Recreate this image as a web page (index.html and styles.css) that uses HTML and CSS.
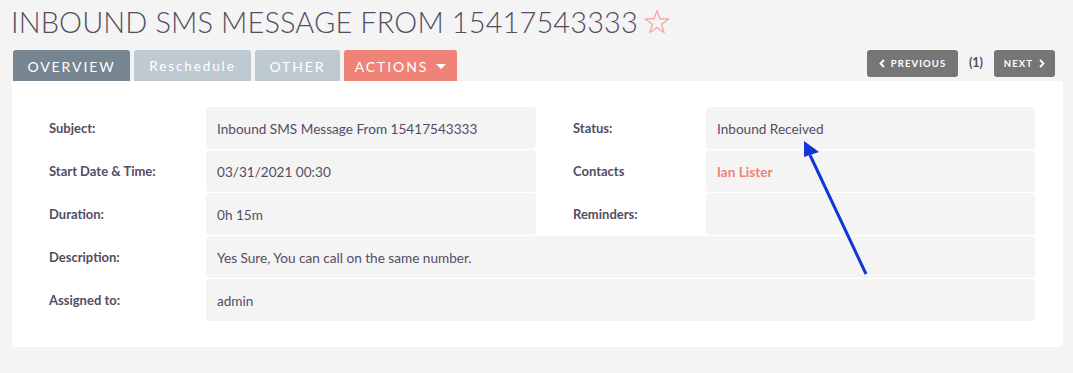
FILE: index.html
```html
<!DOCTYPE html>
<html>
<head>
<meta charset="utf-8">
<link rel="stylesheet" href="styles.css">
</head>
<body>
<div class="page">
  <h1 class="title">INBOUND SMS MESSAGE FROM 15417543333<svg class="star" width="26" height="26" viewBox="0 0 26 26"><polygon points="13,1.5 15.9,9.8 24.6,9.9 17.6,15.2 20.2,23.6 13,18.6 5.8,23.6 8.4,15.2 1.4,9.9 10.1,9.8" fill="none" stroke="#f5a49b" stroke-width="1.2" stroke-linejoin="round"/></svg></h1>
  <div class="bar">
    <div class="tabs">
      <div class="tab active">OVERVIEW</div>
      <div class="tab">Reschedule</div>
      <div class="tab">OTHER</div>
      <div class="tab actions">ACTIONS <span class="caret"></span></div>
    </div>
    <div class="pager">
      <div class="pbtn prev"><svg width="6" height="9" viewBox="0 0 6 9"><polyline points="5,1 1.5,4.5 5,8" fill="none" stroke="#fff" stroke-width="1.8"/></svg>PREVIOUS</div>
      <span class="count">(1)</span>
      <div class="pbtn next">NEXT<svg width="6" height="9" viewBox="0 0 6 9"><polyline points="1,1 4.5,4.5 1,8" fill="none" stroke="#fff" stroke-width="1.8"/></svg></div>
    </div>
  </div>
  <div class="panel">
    <div class="grid">
      <div class="label">Subject:</div>
      <div class="value">Inbound SMS Message From 15417543333</div>
      <div class="spacer"></div>
      <div class="label">Status:</div>
      <div class="value">Inbound Received</div>

      <div class="label">Start Date &amp; Time:</div>
      <div class="value">03/31/2021 00:30</div>
      <div class="spacer"></div>
      <div class="label">Contacts</div>
      <div class="value link">Ian Lister</div>

      <div class="label">Duration:</div>
      <div class="value">0h 15m</div>
      <div class="spacer"></div>
      <div class="label">Reminders:</div>
      <div class="value"></div>

      <div class="label">Description:</div>
      <div class="value wide">Yes Sure, You can call on the same number.</div>

      <div class="label">Assigned to:</div>
      <div class="value wide">admin</div>
    </div>
    <svg class="arrow" width="80" height="150" viewBox="0 0 80 150">
      <line x1="75" y1="141" x2="19" y2="22" stroke="#1136d8" stroke-width="3"/>
      <polygon points="13,8 13,24 28,19" fill="#1136d8"/>
    </svg>
  </div>
</div>
</body>
</html>
```

FILE: styles.css
```css
* { box-sizing: border-box; }
html, body {
  margin: 0;
  padding: 0;
  background: #f4f4f4;
  font-family: Lato, "Open Sans", sans-serif;
  color: #534d64;
}
.page {
  width: 1073px;
  height: 373px;
  padding: 0 10px 0 12px;
}
.title {
  margin: 0 0 0 -1px;
  padding: 6px 0 12px 0;
  height: 50px;
  font-size: 29px;
  font-weight: 300;
  letter-spacing: 0.1px;
  line-height: 32px;
  display: flex;
  align-items: center;
}
.star {
  margin-left: 6px;
  margin-top: -1px;
}
.bar {
  display: flex;
  justify-content: space-between;
  align-items: flex-start;
  height: 31px;
  padding-left: 1px;
}
.tabs {
  display: flex;
  gap: 4px;
}
.tab {
  height: 31px;
  display: flex;
  align-items: center;
  justify-content: center;
  background: #bfc9d2;
  color: #fff;
  font-size: 14px;
  letter-spacing: 1.9px;
  border-radius: 3px 3px 0 0;
  padding-top: 1px;
}
.tab:nth-child(1) { width: 117px; }
.tab:nth-child(2) { width: 117px; font-size: 13.5px; }
.tab:nth-child(3) { width: 85px; }
.tab.active { background: #778591; }
.tab.actions { width: 113px; background: #f08377; }
.caret {
  display: inline-block;
  width: 0;
  height: 0;
  border-left: 5px solid transparent;
  border-right: 5px solid transparent;
  border-top: 5px solid #fff;
  margin-left: 8px;
  margin-top: 1px;
}
.pager {
  display: flex;
  align-items: center;
  margin-right: 8px;
}
.pbtn {
  height: 27px;
  background: #767676;
  color: #fff;
  font-size: 9.5px;
  font-weight: 700;
  letter-spacing: 1.1px;
  border-radius: 3px;
  display: flex;
  align-items: center;
  justify-content: center;
  gap: 6px;
}
.prev { width: 91px; }
.next { width: 61px; }
.count {
  font-size: 12.5px;
  font-weight: 700;
  width: 36px;
  text-align: center;
  padding-bottom: 2px;
}
.panel {
  position: relative;
  background: #fff;
  border-radius: 0 3px 3px 3px;
  width: 1051px;
  padding: 26px 28px 26px 37px;
}
.grid {
  display: grid;
  grid-template-columns: 157px 330px 37px 133px 1fr;
  grid-auto-rows: 42px;
  row-gap: 1px;
}
.label {
  font-size: 13px;
  font-weight: 700;
  display: flex;
  align-items: center;
}
.value {
  background: #f4f4f4;
  border-radius: 4px;
  font-size: 13.6px;
  display: flex;
  align-items: center;
  padding-left: 11px;
  padding-top: 2px;
}
.value.wide { grid-column: 2 / -1; }
.value.link { color: #f08377; font-weight: 700; }
.arrow {
  position: absolute;
  left: 779px;
  top: 52px;
}
```
